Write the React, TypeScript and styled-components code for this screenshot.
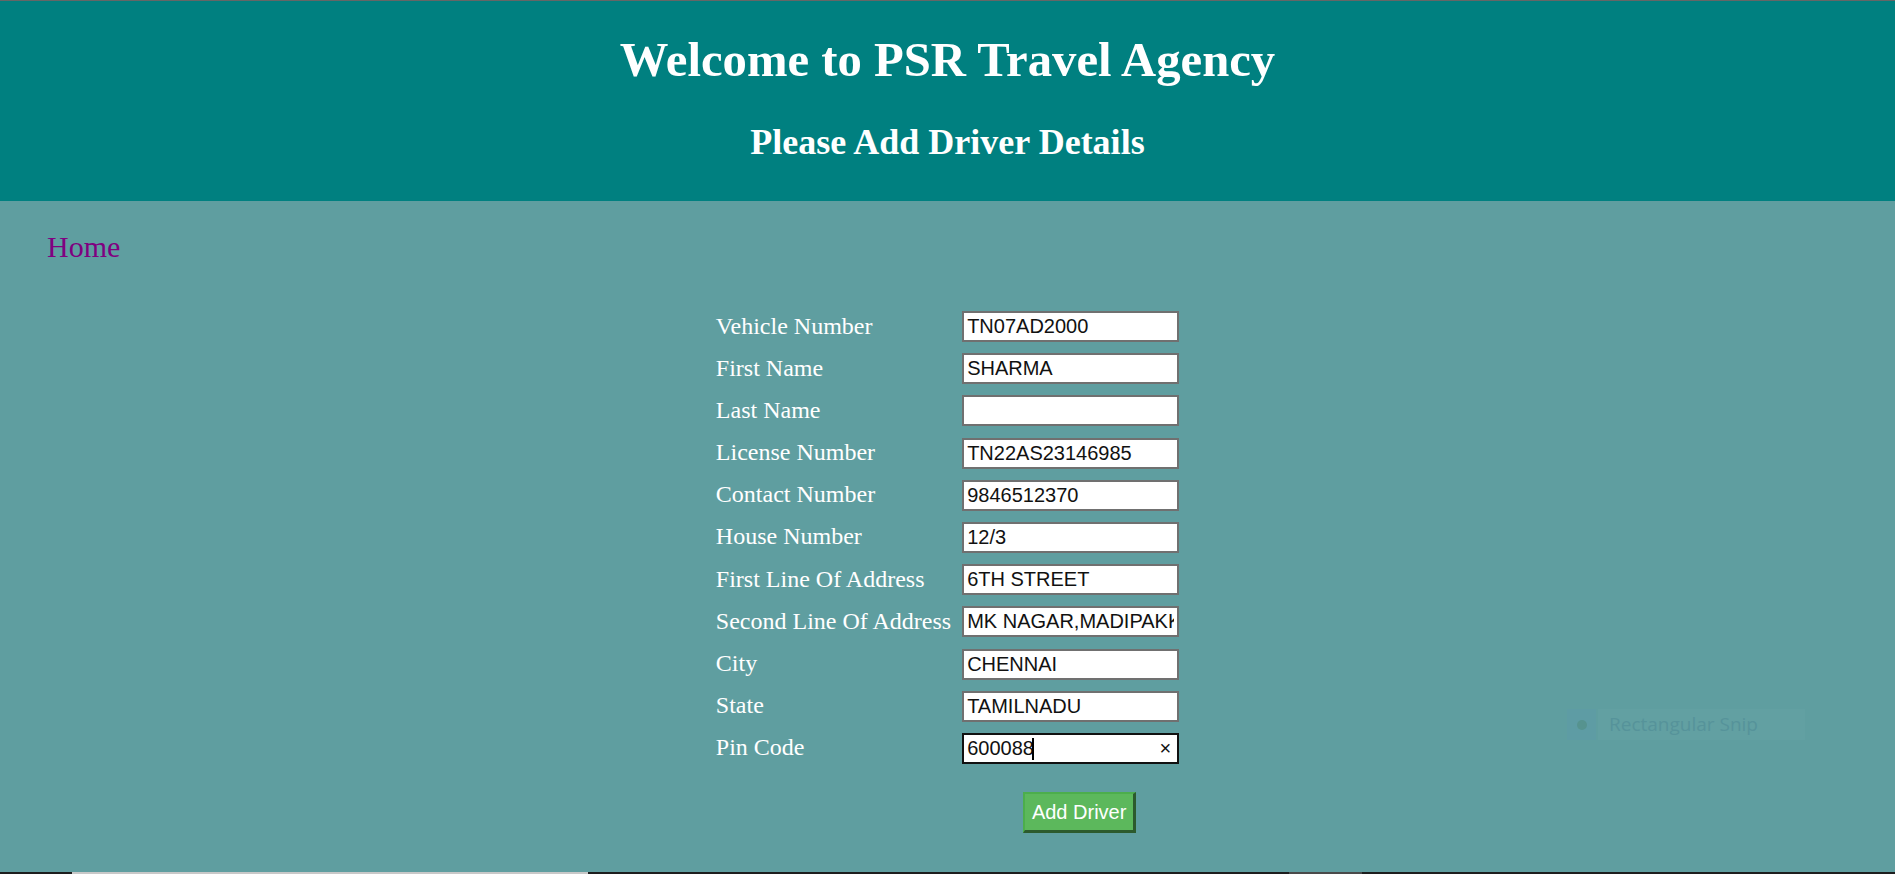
import React from "react";
import styled, { createGlobalStyle } from "styled-components";

const Global = createGlobalStyle`
  html, body { margin: 0; padding: 0; height: 100%; }
  body { background: #5f9ea0; font-family: "Liberation Serif", "Times New Roman", serif; }
  #root { min-height: 100vh; }
`;

const Page = styled.div`
  min-height: 100vh;
  display: flex;
  flex-direction: column;
  background: #5f9ea0;
`;

const Header = styled.header`
  background: #008080;
  border-top: 1px solid #666;
  padding: 33px 0 39px;
  text-align: center;
  color: #fff;
`;

const Title = styled.h1`
  margin: 0;
  font-size: 48.7px;
  line-height: 53px;
  font-weight: bold;
`;

const Subtitle = styled.h2`
  margin: 35px 0 0;
  font-size: 36px;
  line-height: 40px;
  font-weight: bold;
`;

const Main = styled.main`
  position: relative;
  flex: 1;
  padding: 29px 0 0 47px;
`;

const HomeLink = styled.a`
  display: inline-block;
  font-size: 30px;
  line-height: 34px;
  color: #800080;
  text-decoration: none;
`;

const Form = styled.form`
  display: grid;
  grid-template-columns: auto 217px;
  column-gap: 11px;
  row-gap: 11.2px;
  justify-content: center;
  align-items: center;
  margin: 47px 47px 0 0;
`;

const Label = styled.label`
  color: #fff;
  font-size: 24px;
  line-height: 28px;
  margin-bottom: 2px;
  white-space: nowrap;
`;

const FieldWrap = styled.div`
  position: relative;
  width: 217px;
`;

const Input = styled.input<{ $focused?: boolean }>`
  box-sizing: border-box;
  width: 217px;
  height: 31px;
  margin: 0;
  padding: 2px 3px;
  border: 2px solid ${(p) => (p.$focused ? "#111" : "#707070")};
  background: #fff;
  color: #111;
  font-family: "Liberation Sans", Arial, sans-serif;
  font-size: 20px;
  line-height: 23px;
  outline: none;
`;

const ClearMark = styled.span`
  position: absolute;
  right: 8px;
  top: 3px;
  font-family: "Liberation Sans", Arial, sans-serif;
  font-size: 20px;
  line-height: 24px;
  color: #111;
  pointer-events: none;
`;

const Caret = styled.span`
  position: absolute;
  left: 70px;
  top: 5px;
  width: 2px;
  height: 22px;
  background: #000;
  pointer-events: none;
`;

const ButtonCell = styled.div`
  grid-column: 2;
  margin-top: 17px;
  padding-left: 61px;
`;

const Button = styled.button`
  box-sizing: border-box;
  width: 113px;
  height: 41px;
  padding: 7px 0;
  background: #5cb85c;
  color: #fff;
  font-family: "Liberation Sans", Arial, sans-serif;
  font-size: 20px;
  line-height: 23px;
  border: 2px solid;
  border-color: #4cae4c #2c5a2d #2c5a2d #4cae4c;
  border-width: 2px 3px 3px 2px;
  cursor: pointer;
`;

const SnipGhost = styled.div`
  position: absolute;
  top: 508px;
  right: 90px;
  display: flex;
  gap: 2px;
  height: 31px;
`;

const SnipIcon = styled.div`
  width: 29px;
  background: #5e9ca4;
  display: flex;
  align-items: center;
  justify-content: center;
  &::after {
    content: "";
    width: 10px;
    height: 10px;
    border-radius: 50%;
    background: #56938f;
  }
`;

const SnipText = styled.div`
  width: 196px;
  padding-left: 11px;
  background: #62a0a2;
  color: #56939a;
  font-family: "Open Sans", "Noto Sans", sans-serif;
  font-size: 19px;
  line-height: 31px;
`;

const TaskbarEdge = styled.div`
  height: 2px;
  background: #1e1e1e;
  display: flex;
`;

const EdgeSeg = styled.div<{ $w: number; $c: string; $ml: number }>`
  width: ${(p) => p.$w}px;
  margin-left: ${(p) => p.$ml}px;
  background: ${(p) => p.$c};
`;

const fields: [string, string][] = [
  ["Vehicle Number", "TN07AD2000"],
  ["First Name", "SHARMA"],
  ["Last Name", ""],
  ["License Number", "TN22AS23146985"],
  ["Contact Number", "9846512370"],
  ["House Number", "12/3"],
  ["First Line Of Address", "6TH STREET"],
  ["Second Line Of Address", "MK NAGAR,MADIPAKKAM"],
  ["City", "CHENNAI"],
  ["State", "TAMILNADU"],
];

export default function App() {
  return (
    <Page>
      <Global />
      <Header>
        <Title>Welcome to PSR Travel Agency</Title>
        <Subtitle>Please Add Driver Details</Subtitle>
      </Header>
      <Main>
        <HomeLink href="#">Home</HomeLink>
        <Form onSubmit={(e) => e.preventDefault()}>
          {fields.map(([label, value]) => (
            <React.Fragment key={label}>
              <Label>{label}</Label>
              <FieldWrap>
                <Input defaultValue={value} />
              </FieldWrap>
            </React.Fragment>
          ))}
          <Label>Pin Code</Label>
          <FieldWrap>
            <Input $focused defaultValue="600088" />
            <Caret />
            <ClearMark>×</ClearMark>
          </FieldWrap>
          <ButtonCell>
            <Button type="submit">Add Driver</Button>
          </ButtonCell>
        </Form>
        <SnipGhost>
          <SnipIcon />
          <SnipText>Rectangular Snip</SnipText>
        </SnipGhost>
      </Main>
      <TaskbarEdge>
        <EdgeSeg $ml={72} $w={516} $c="#c8c8c8" />
        <EdgeSeg $ml={701} $w={73} $c="#4a4a4a" />
      </TaskbarEdge>
    </Page>
  );
}
